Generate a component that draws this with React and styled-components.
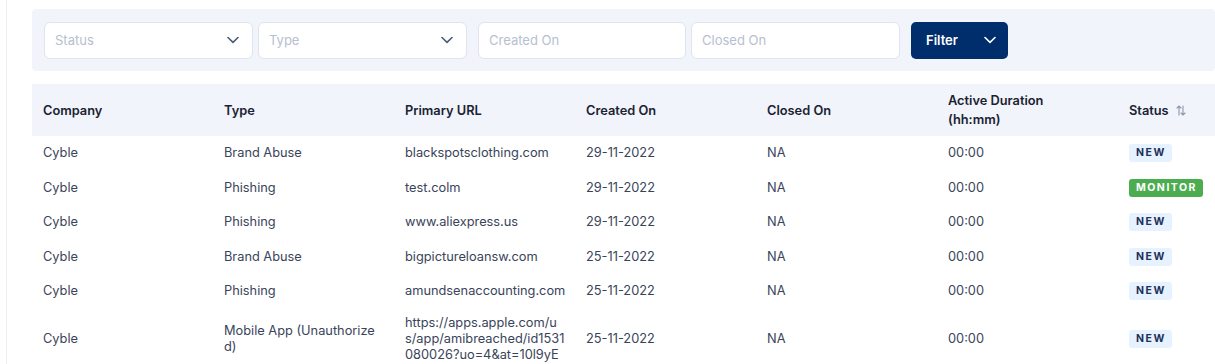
import React from 'react'
import styled, { createGlobalStyle } from 'styled-components'

const GlobalStyle = createGlobalStyle`
	body {
		margin: 0;
		background: #fff;
		font-family: Inter, "Noto Sans", sans-serif;
		overflow: hidden;
	}
`

const Main = styled.div`
	margin-left: 6px;
	border-left: 1px solid #eceff5;
	padding: 9px 0 0 25px;
	height: 364px;
	overflow: hidden;
	box-sizing: border-box;
`

const FilterPanel = styled.div`
	background: #f1f4fa;
	border-radius: 4px;
	height: 62px;
	padding: 0 12px;
	display: flex;
	align-items: center;
	box-sizing: border-box;
`

const FieldGroup = styled.div`
	display: flex;
	gap: 5px;
	margin-right: 11px;
`

const Field = styled.div`
	width: ${p => p.$width}px;
	height: 37px;
	box-sizing: border-box;
	background: #fff;
	border: 1px solid #dfe4ee;
	border-radius: 6px;
	padding: 0 13px 0 10px;
	display: flex;
	align-items: center;
	justify-content: space-between;
	font-size: 13px;
	color: #b7c0d0;
`

const FilterButton = styled.button`
	width: 97px;
	height: 37px;
	border: none;
	border-radius: 5px;
	background: #002e6d;
	color: #fff;
	font-family: inherit;
	font-size: 13px;
	font-weight: 600;
	padding: 0 12px 0 15px;
	display: flex;
	align-items: center;
	justify-content: space-between;
`

const Table = styled.table`
	margin-top: 13px;
	width: 1267px;
	table-layout: fixed;
	border-collapse: collapse;
`

const HeadCell = styled.th`
	width: 181px;
	height: 52px;
	background: #f1f4fa;
	padding: 0 9px 0 11px;
	text-align: left;
	font-size: 12.8px;
	font-weight: 600;
	line-height: 19px;
	color: #1b2232;
	box-sizing: border-box;
`

const Row = styled.tr`
	height: ${p => (p.$tall ? 'auto' : '34.5px')};
`

const Cell = styled.td`
	padding: 6px 9px 6px 11px;
	font-size: 12.8px;
	line-height: 16px;
	color: #39445a;
	vertical-align: middle;
	word-break: break-all;
`

const Badge = styled.span`
	display: inline-block;
	padding: 0 6px 0 7px;
	height: 18px;
	line-height: 18px;
	border-radius: 3px;
	font-size: 10.5px;
	font-weight: 700;
	letter-spacing: 1.5px;
	background: ${p => (p.$tone === 'green' ? '#4cad50' : '#e6f2ff')};
	color: ${p => (p.$tone === 'green' ? '#fff' : '#22305a')};
`

const SortLabel = styled.span`
	display: inline-flex;
	align-items: center;
	gap: 7px;
`

const Chevron = ({ color = '#4a5a78' }) => (
	<svg width="12" height="8" viewBox="0 0 12 8" fill="none">
		<path d="M1 1.5l5 4.8 5-4.8" stroke={color} strokeWidth="1.6" strokeLinecap="round" strokeLinejoin="round" />
	</svg>
)

const SortIcon = () => (
	<svg width="10" height="11" viewBox="0 0 10 11" fill="none" stroke="#8d96a8" strokeWidth="1.1" strokeLinecap="round">
		<path d="M3 10V1M1 3l2-2 2 2" />
		<path d="M7 1v9M5 8l2 2 2-2" />
	</svg>
)

const rows = [
	{ type: 'Brand Abuse', url: 'blackspotsclothing.com', created: '29-11-2022', status: 'NEW' },
	{ type: 'Phishing', url: 'test.colm', created: '29-11-2022', status: 'MONITOR' },
	{ type: 'Phishing', url: 'www.aliexpress.us', created: '29-11-2022', status: 'NEW' },
	{ type: 'Brand Abuse', url: 'bigpictureloansw.com', created: '25-11-2022', status: 'NEW' },
	{ type: 'Phishing', url: 'amundsenaccounting.com', created: '25-11-2022', status: 'NEW' },
	{
		type: 'Mobile App (Unauthorized)',
		url: 'https://apps.apple.com/us/app/amibreached/id1531080026?uo=4&at=10l9yE',
		created: '25-11-2022',
		status: 'NEW',
		tall: true,
	},
]

const App = () => {
	return (
		<>
			<GlobalStyle />
			<Main>
				<FilterPanel>
					<FieldGroup>
						<Field $width={209}>
							Status <Chevron />
						</Field>
						<Field $width={209}>
							Type <Chevron />
						</Field>
					</FieldGroup>
					<FieldGroup>
						<Field $width={208}>Created On</Field>
						<Field $width={209}>Closed On</Field>
					</FieldGroup>
					<FilterButton>
						Filter <Chevron color="#fff" />
					</FilterButton>
				</FilterPanel>
				<Table>
					<thead>
						<tr>
							<HeadCell>Company</HeadCell>
							<HeadCell>Type</HeadCell>
							<HeadCell>Primary URL</HeadCell>
							<HeadCell>Created On</HeadCell>
							<HeadCell>Closed On</HeadCell>
							<HeadCell>
								Active Duration
								<br />
								(hh:mm)
							</HeadCell>
							<HeadCell>
								<SortLabel>
									Status <SortIcon />
								</SortLabel>
							</HeadCell>
						</tr>
					</thead>
					<tbody>
						{rows.map((r, i) => (
							<Row key={i} $tall={r.tall}>
								<Cell>Cyble</Cell>
								<Cell>{r.type}</Cell>
								<Cell>{r.url}</Cell>
								<Cell>{r.created}</Cell>
								<Cell>NA</Cell>
								<Cell>00:00</Cell>
								<Cell>
									<Badge $tone={r.status === 'MONITOR' ? 'green' : 'blue'}>{r.status}</Badge>
								</Cell>
							</Row>
						))}
					</tbody>
				</Table>
			</Main>
		</>
	)
}

export default App
